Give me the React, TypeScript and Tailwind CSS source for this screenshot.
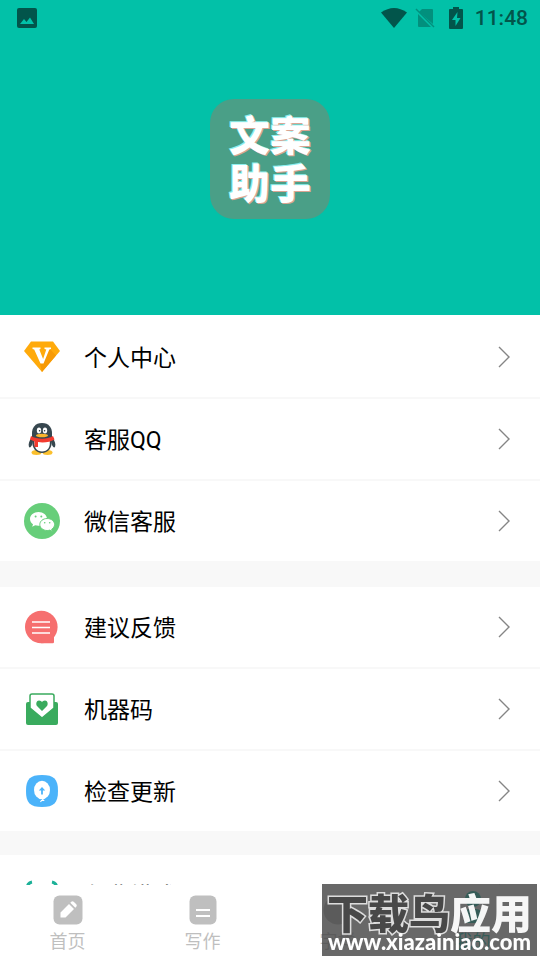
import type { ReactNode } from 'react';

type Item = { label: string; icon: ReactNode };

function VipIcon() {
  return (
    <svg viewBox="0 0 36 36" className="size-9" aria-hidden="true">
      <path d="M7 2.500h22l7 9.500L18 33 0 12z" fill="#ffaa0b" />
      <path d="M26 10l6 6.500L18 33l-2-8.500z" fill="#f79a05" />
      <path d="M8.500 8.500h8v1.500l-1.200.4 3.800 9.600 3.200-9.600-1.800-.4V8.500H27V10l-1.700.5L19.500 24.500h-3L10.200 10.500 8.500 10z" fill="#fff" />
    </svg>
  );
}

function QqIcon() {
  return (
    <svg viewBox="0 0 36 36" className="size-9" aria-hidden="true">
      <ellipse cx="12.500" cy="31.500" rx="5" ry="2.500" fill="#fbc02d" />
      <ellipse cx="23.500" cy="31.500" rx="5" ry="2.500" fill="#fbc02d" />
      <path d="M8 16c-3 4-4 7-3 10 1 1 2 0 3-2zM28 16c3 4 4 7 3 10-1 1-2 0-3-2z" fill="#37474f" />
      <path d="M18 2c-7 0-10 5-10 10v8c0 7 4 12 10 12s10-5 10-12v-8c0-5-3-10-10-10z" fill="#37474f" />
      <path d="M10.500 19h15c1.500 7-2 11.500-7.500 11.500S9.500 26 10.500 19z" fill="#fff" />
      <ellipse cx="15" cy="9.500" rx="2.200" ry="3" fill="#fff" />
      <ellipse cx="21" cy="9.500" rx="2.200" ry="3" fill="#fff" />
      <circle cx="15.600" cy="9.800" r="0.800" fill="#263238" />
      <circle cx="20.600" cy="9.800" r="0.800" fill="#263238" />
      <ellipse cx="18" cy="14.500" rx="6" ry="1.700" fill="#fbb52d" />
      <path d="M7 15c6 3.500 16 3.500 22 0l1.500 3.500c-4 2.500-11 3.500-16.500 2.500V26h-3.500v-5.500L6 18.500z" fill="#f23b2f" />
    </svg>
  );
}

function WechatIcon() {
  return (
    <svg viewBox="0 0 36 36" className="size-9" aria-hidden="true">
      <circle cx="18" cy="18" r="18" fill="#67ce7a" />
      <path d="M14.500 9C9.800 9 6 12 6 15.900c0 2.200 1.200 4 3 5.300l-.8 2.600 3-1.600c1 .3 2.100.5 3.300.5 4.700 0 8.500-3 8.500-6.800S19.200 9 14.500 9z" fill="#fff" />
      <path d="M23.200 15.500c-4.200 0-7.400 2.700-7.400 6s3.200 6 7.400 6c.9 0 1.800-.1 2.600-.4l2.500 1.300-.6-2.200c1.800-1.100 2.900-2.800 2.900-4.700 0-3.300-3.300-6-7.400-6z" fill="#fff" stroke="#67ce7a" strokeWidth="1" />
      <g fill="#67ce7a">
        <circle cx="11.600" cy="13.500" r="1" />
        <circle cx="17.300" cy="13.500" r="1" />
        <circle cx="20.700" cy="19.700" r="0.800" />
        <circle cx="25.700" cy="19.700" r="0.800" />
      </g>
    </svg>
  );
}

function FeedbackIcon() {
  return (
    <svg viewBox="0 0 36 36" className="size-9" aria-hidden="true">
      <circle cx="17.300" cy="18" r="16.300" fill="#f66f6f" />
      <path d="M17.300 25H30v8q0 1.300-1.300 1.300H17.300z" fill="#f66f6f" />
      <path d="M8 13h18M8 18.500h18M8 24h18" stroke="#fff" strokeWidth="1.500" />
    </svg>
  );
}

function MachineIcon() {
  return (
    <svg viewBox="0 0 36 36" className="size-9" aria-hidden="true">
      <path d="M2 13q0-2 2-2h28q2 0 2 2v19q0 2-2 2H4q-2 0-2-2z" fill="#3aab5e" />
      <path d="M6 17V5q0-2 2-2h20q2 0 2 2v12L18 27z" fill="#fff" stroke="#3aab5e" strokeWidth="1.500" />
      <path d="M18 20l-5-5c-1.500-2-.5-5.500 2-5.500 1.500 0 2.500 1 3 1.500.5-.5 1.500-1.500 3-1.500 2.500 0 3.500 3.500 2 5.500z" fill="#3aab5e" />
    </svg>
  );
}

function UpdateIcon() {
  return (
    <svg viewBox="0 0 36 36" className="size-9" aria-hidden="true">
      <path d="M18 2c12 0 16 4 16 16s-4 16-16 16S2 30 2 18 6 2 18 2z" fill="#4bb3fa" />
      <ellipse cx="18" cy="17" rx="8" ry="9.300" fill="#fff" />
      <path d="M18 25.500l1.500 2h-2l-1 1.500" fill="none" stroke="#fff" strokeWidth="1.200" />
      <path d="M18 21.500v-5" stroke="#4bb3fa" strokeWidth="1.800" />
      <path d="M14.800 17.500L18 14l3.200 3.500z" fill="#4bb3fa" />
    </svg>
  );
}

function ScanIcon() {
  return (
    <svg viewBox="0 0 36 36" className="size-9" aria-hidden="true">
      <path d="M3 12q0-6 5-7M28 5q5 1 5 7M3 26q0 6 5 7M28 33q5-1 5-7M8 18h20" fill="none" stroke="#1cb198" strokeWidth="3" />
    </svg>
  );
}

const groups: Item[][] = [
  [
    { label: '个人中心', icon: <VipIcon /> },
    { label: '客服QQ', icon: <QqIcon /> },
    { label: '微信客服', icon: <WechatIcon /> },
  ],
  [
    { label: '建议反馈', icon: <FeedbackIcon /> },
    { label: '机器码', icon: <MachineIcon /> },
    { label: '检查更新', icon: <UpdateIcon /> },
  ],
  [{ label: '免费模式', icon: <ScanIcon /> }],
];

const tabs = [
  {
    label: '首页',
    icon: (
      <svg viewBox="0 0 30 30" className="size-[30px]" aria-hidden="true">
        <rect x="0.500" y="0.500" width="29" height="29" rx="6" fill="currentColor" />
        <path d="M7.500 17.500L16 9l5 5-8.500 8.500h-5zM17.300 7.700l1-1q1.200-1 2.400 0l2.600 2.600q1 1.200 0 2.400l-1 1z" fill="#fff" />
      </svg>
    ),
  },
  {
    label: '写作',
    icon: (
      <svg viewBox="0 0 30 30" className="size-[30px]" aria-hidden="true">
        <rect x="1.500" y="0.500" width="27" height="29" rx="6" fill="currentColor" />
        <path d="M8 15h14M8 21h14" stroke="#fff" strokeWidth="2" />
      </svg>
    ),
  },
  {
    label: '字样',
    icon: (
      <svg viewBox="0 0 30 30" className="size-[30px]" aria-hidden="true">
        <circle cx="15" cy="15" r="14.500" fill="currentColor" />
      </svg>
    ),
  },
  {
    label: '我的',
    active: true,
    icon: (
      <svg viewBox="0 0 30 30" className="size-[30px] overflow-visible" aria-hidden="true">
        <circle cx="15" cy="4" r="8" fill="currentColor" />
        <path d="M6 26v-6q0-6 6-6h6q6 0 6 6v6q0 2-2 2H8q-2 0-2-2z" fill="currentColor" />
      </svg>
    ),
  },
];

function StatusBar() {
  return (
    <div className="flex h-9 items-center justify-between pr-3 pl-[17px] text-[#02554b]">
      <svg viewBox="0 0 20 20" className="size-5" aria-hidden="true">
        <rect width="20" height="20" rx="2" fill="currentColor" />
        <path d="M3 16l4-5 2.500 3L13 9.500l4 6.500z" fill="#02c1a8" />
      </svg>
      <div className="flex items-center">
        <svg viewBox="0 0 26 20" className="h-5 w-[26px]" aria-hidden="true">
          <path d="M0 4.500Q13-4.500 26 4.500L13 20z" fill="currentColor" />
        </svg>
        <svg viewBox="0 0 20 20" className="ml-2 size-5 opacity-45" aria-hidden="true">
          <path d="M7 1h10q1 0 1 1v14L4 4zM3 6l13 13H4q-1 0-1-1z" fill="currentColor" />
          <path d="M1 1l18 18" stroke="currentColor" strokeWidth="1.500" />
        </svg>
        <svg viewBox="0 0 14 22" className="ml-3.5 h-[22px] w-3.5" aria-hidden="true">
          <path d="M4 0h6v2h3q1 0 1 1v18q0 1-1 1H1q-1 0-1-1V3q0-1 1-1h3z" fill="currentColor" />
          <path d="M8.500 5L3 13h3.500v6L11.500 11H8z" fill="#02c1a8" />
        </svg>
        <span className="ml-3 font-['Roboto',sans-serif] text-[21px] leading-6 font-medium">11:48</span>
      </div>
    </div>
  );
}

function Row({ label, icon }: Item) {
  return (
    <li>
      <button type="button" className="flex h-20 w-full items-center pr-[30px] pl-6 text-left">
        {icon}
        <span className="ml-6 flex-1 pt-1 text-[23px] leading-8 text-black">{label}</span>
        <svg viewBox="0 0 12 22" className="h-[22px] w-3" aria-hidden="true">
          <path d="M1 1l10 10L1 21" fill="none" stroke="#858585" strokeWidth="1.400" />
        </svg>
      </button>
    </li>
  );
}

export default function App() {
  return (
    <div className="h-screen overflow-hidden bg-[#f8f8f8] font-['Roboto','Noto_Sans_CJK_SC',sans-serif]">
      <header className="h-[315px] bg-[#02c1a8]">
        <StatusBar />
        <div className="mx-auto mt-[63px] flex size-[120px] items-center justify-center rounded-[24px] bg-[#4a9f87] pb-1">
          <h1 className="text-center font-['Noto_Sans_CJK_SC',sans-serif] text-[41px] leading-[48px] font-black text-white [text-shadow:1px_1px_0_#d9a593,-1px_-1px_0_#8ff0ee]">
            文案
            <br />
            助手
          </h1>
        </div>
      </header>

      <main>
        {groups.map((items) => (
          <ul key={items[0].label} className="mb-6 divide-y-2 divide-[#f8f8f8] bg-white first:mb-[26px] first:pt-0.5">
            {items.map((item) => (
              <Row key={item.label} {...item} />
            ))}
          </ul>
        ))}
      </main>

      <nav className="fixed inset-x-0 bottom-0 grid h-[75px] grid-cols-4 bg-white">
        {tabs.map((tab) => (
          <a
            key={tab.label}
            href="#"
            className={`flex flex-col items-center pt-2.5 text-[18px] leading-[34px] ${tab.active ? 'text-[#02c1a8]' : 'text-[#bfbfbf]'}`}
          >
            {tab.icon}
            {tab.label}
          </a>
        ))}
      </nav>

      <div className="fixed right-[3px] bottom-1 flex h-[72px] w-[215px] flex-col items-center bg-[#424242]/80 whitespace-nowrap text-white">
        <div className="mt-1 font-['Noto_Sans_CJK_SC',sans-serif] text-[41px] leading-[46px] font-black">
          <span className="text-[#484848] [-webkit-text-stroke:3px_#ddd] [paint-order:stroke_fill]">下载鸟</span>
          <span className="text-white/95">应用</span>
        </div>
        <div className="-mt-1 font-['Lato',sans-serif] text-[22px] leading-6 font-black">www.xiazainiao.com</div>
      </div>
    </div>
  );
}
